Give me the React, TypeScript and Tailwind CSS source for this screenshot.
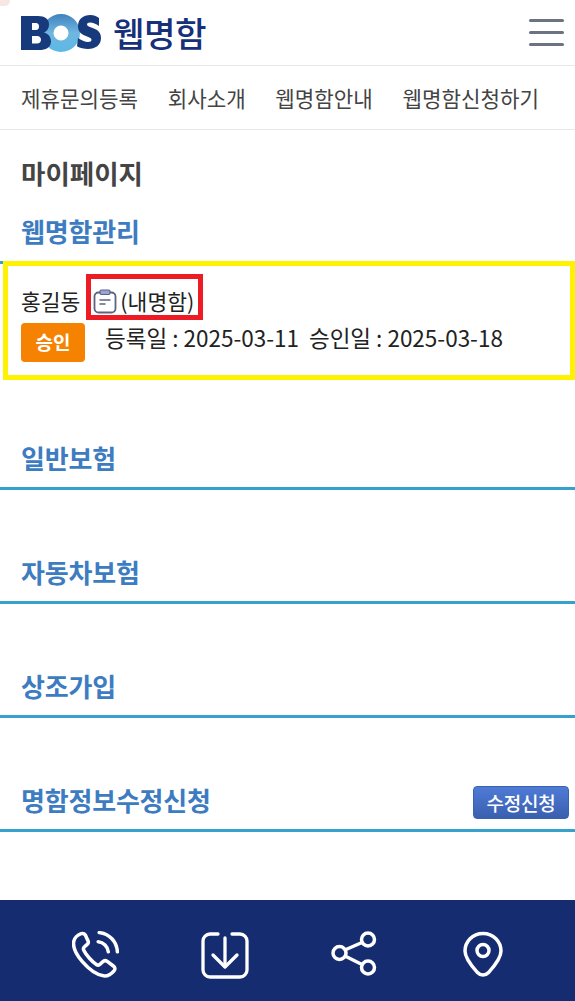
const KR = "font-['Noto_Sans_CJK_KR','Noto_Sans',sans-serif]";

function Logo() {
  return (
    <div className="flex items-center gap-[12px]">
      <svg width="80" height="38" viewBox="0 0 80 38" className="block">
        <defs>
          <linearGradient id="ring" x1="0" y1="0" x2="0" y2="1">
            <stop offset="0" stopColor="#3f82bd" />
            <stop offset="0.5" stopColor="#6fb6e0" />
            <stop offset="1" stopColor="#5cb9e6" />
          </linearGradient>
        </defs>
        <path
          fillRule="evenodd"
          fill="url(#ring)"
          d="M40 0a19 19 0 1 1 0 38a19 19 0 1 1 0-38zM40 11.500a7.500 7.500 0 1 0 0 15a7.500 7.500 0 1 0 0-15z"
        />
        <path
          fillRule="evenodd"
          fill="#163a7c"
          d="M0 2h17c7 0 11 3 11 8.500 0 4-2 6.500-5 8 4 1 7 4 7 9 0 6-5 8.500-12 8.500H0zM11 9v7h4c2 0 3-1.500 3-3.500S17 9 15 9zM11 22v7.500h5c2.500 0 4-1.500 4-3.800S18.500 22 16 22z"
        />
        <path
          fill="#163a7c"
          d="M78 4v8c-3-2-6-3.500-9-3.500-2 0-3 .8-3 2 0 1.500 2 2.200 5 3.300 5 1.700 9 4 9 10.200 0 7-5.500 11-13 11-4 0-8-1-11-2.800l1-8.200c3 2.300 7 4 10 4 2.300 0 3.500-1 3.500-2.300 0-1.500-1.500-2.200-5-3.500-5-1.800-8.500-4.300-8.500-10C57 5 62 1 69.500 1c3 0 6 1 8.500 3z"
        />
      </svg>
      <span className="text-[34.300px] leading-none font-medium text-[#16307a] tracking-[-0.5px]">웹명함</span>
    </div>
  );
}

function Section({ title, action }: { title: string; action?: string }) {
  return (
    <div className="flex h-[114px] flex-col justify-end border-b-[3px] border-[#36a1cb] pb-[10px] pl-[21px] pr-[6px]">
      <div className="flex items-center justify-between">
        <h2 className="text-[26px] leading-[38px] font-bold tracking-[-0.2px] text-[#3d7cc0]">{title}</h2>
        {action && (
          <button className="mt-[4px] h-[33px] w-[96px] rounded-[4px] border border-[#3a62b4] bg-gradient-to-b from-[#4f7bd6] to-[#3a5fae] text-[19px] leading-none font-medium tracking-[-0.2px] text-white">
            {action}
          </button>
        )}
      </div>
    </div>
  );
}

function PhoneIcon() {
  return (
    <svg width="47" height="47" viewBox="2.500 1 44 44" fill="none" stroke="#fff" strokeWidth="3.300" strokeLinecap="round" strokeLinejoin="round">
      <path d="M11 3.500c-3 1-6.500 4-7 8-.6 5 2.500 11.500 8 18 6 7 13 12.500 20 13.500 4 .6 7.500-2 10-5 1-1.300.8-3-.5-4l-6-4.500c-1.300-1-3-1-4.200.2l-2.300 2.300c-1 1-2.500 1.200-3.700.4-3.500-2.300-9.800-9-11.800-13.300-.6-1.300-.2-2.700.8-3.500l2.200-1.900c1.200-1 1.500-2.800.7-4.100L15 4.800c-.9-1.300-2.500-1.800-4-1.300z" />
      <path d="M27 11c5 .5 9 4.500 9.500 9.500" />
      <path d="M28 2.500c9.500 1 16.500 8.500 17 18" />
    </svg>
  );
}

function DownloadIcon() {
  return (
    <svg width="48" height="48" viewBox="0 0 48 48" fill="none" stroke="#fff" strokeWidth="3.300" strokeLinecap="round" strokeLinejoin="round">
      <path d="M17 3H9a7 7 0 0 0-7 7v29a7 7 0 0 0 7 7h30a7 7 0 0 0 7-7V10a7 7 0 0 0-7-7h-8" />
      <path d="M24 7v28" />
      <path d="M12 24l12 12 12-12" />
    </svg>
  );
}

function ShareIcon() {
  return (
    <svg width="48" height="48" viewBox="0 0 48 48" fill="none" stroke="#fff" strokeWidth="3.500" strokeLinecap="round">
      <circle cx="8.500" cy="22" r="6.500" />
      <circle cx="37" cy="8.500" r="6.500" />
      <circle cx="37" cy="36.500" r="6.500" />
      <path d="M15 18.500l16-7M15 25.500l16 8" />
    </svg>
  );
}

function PinIcon() {
  return (
    <svg width="40" height="48" viewBox="0 0 40 48" fill="none" stroke="#fff" strokeWidth="3.500" strokeLinejoin="round" className="ml-[2px]">
      <path d="M20 2.500C9.500 2.500 2 10.500 2 20c0 8 8 16.500 12.500 21.500 3 3.300 8 3.300 11 0C30 36.500 38 28 38 20c0-9.500-7.500-17.500-18-17.500z" />
      <circle cx="20" cy="19.500" r="6" />
    </svg>
  );
}

export default function App() {
  return (
    <div className={`relative flex h-[1001px] w-[575px] flex-col overflow-hidden bg-white ${KR}`}>
      <div className="absolute -left-[6px] -top-[5px] h-[11px] w-[16px] rounded-full bg-[#f6e6e4]" />
      <header className="flex h-[66px] items-center justify-between border-b border-[#e8e8e8] pl-[21px] pr-[11px]">
        <Logo />
        <div className="flex w-[35px] flex-col gap-[9px]">
          <div className="h-[3px] rounded-full bg-[#6b7280]" />
          <div className="h-[3px] rounded-full bg-[#6b7280]" />
          <div className="h-[3px] rounded-full bg-[#6b7280]" />
        </div>
      </header>

      <nav className="flex h-[64px] items-center justify-between border-b border-[#e8e8e8] pl-[21px] pr-[36px] text-[21.200px] text-[#444]">
        <span>제휴문의등록</span>
        <span>회사소개</span>
        <span>웹명함안내</span>
        <span>웹명함신청하기</span>
      </nav>

      <main className="flex-1">
        <h1 className="pl-[21px] pt-[24px] text-[26.500px] leading-[38px] font-bold text-[#444]">마이페이지</h1>
        <h2 className="border-b-[3px] border-[#36a1cb] pb-[11px] pl-[21px] pt-[20px] text-[26px] leading-[38px] font-bold tracking-[-0.2px] text-[#3d7cc0]">웹명함관리</h2>

        <div className="relative -mt-[3px] ml-[3px] h-[119px] border-[5px] border-[#fff200] bg-white pl-[13px] pt-[20px] text-[#222]">
          <div className="flex h-[30px] items-center text-[21.500px] leading-[30px]">
            <span>홍길동</span>
            <div className="relative ml-[13px] flex items-center">
              <span className="absolute -left-[7px] -right-[9px] -top-[12px] -bottom-[4px] border-[5px] border-[#ed1c24]" />
              <svg width="24" height="25" viewBox="0 0 24 25" fill="none" className="relative">
                <rect x="1.500" y="3.500" width="21" height="20" rx="4" stroke="#5c6480" strokeWidth="1.800" />
                <rect x="7" y="1" width="10" height="4.500" rx="1.500" fill="#98a5dc" stroke="#5c6480" strokeWidth="1.200" />
                <path d="M7 11h10M7 15h5" stroke="#5c6480" strokeWidth="1.500" strokeLinecap="round" />
              </svg>
              <span className="relative ml-[3px]">(내명함)</span>
            </div>
          </div>
          <div className="mt-[7px] flex items-start">
            <span className="flex h-[39px] w-[64px] items-center justify-center rounded-[4px] bg-[#f58200] text-[19px] font-bold text-white">승인</span>
            <span className="ml-[20px] -mt-[1px] text-[22.500px] leading-[30px]">등록일 : 2025-03-11</span>
            <span className="ml-[10px] -mt-[1px] text-[22.500px] leading-[30px]">승인일 : 2025-03-18</span>
          </div>
        </div>

        <div className="-mt-[4px]">
          <Section title="일반보험" />
          <Section title="자동차보험" />
          <Section title="상조가입" />
          <Section title="명함정보수정신청" action="수정신청" />
        </div>
      </main>

      <footer className="flex h-[101px] items-center gap-[82px] bg-[#152c70] pl-[72px] pt-[8px]">
        <PhoneIcon />
        <DownloadIcon />
        <ShareIcon />
        <PinIcon />
      </footer>
    </div>
  );
}
